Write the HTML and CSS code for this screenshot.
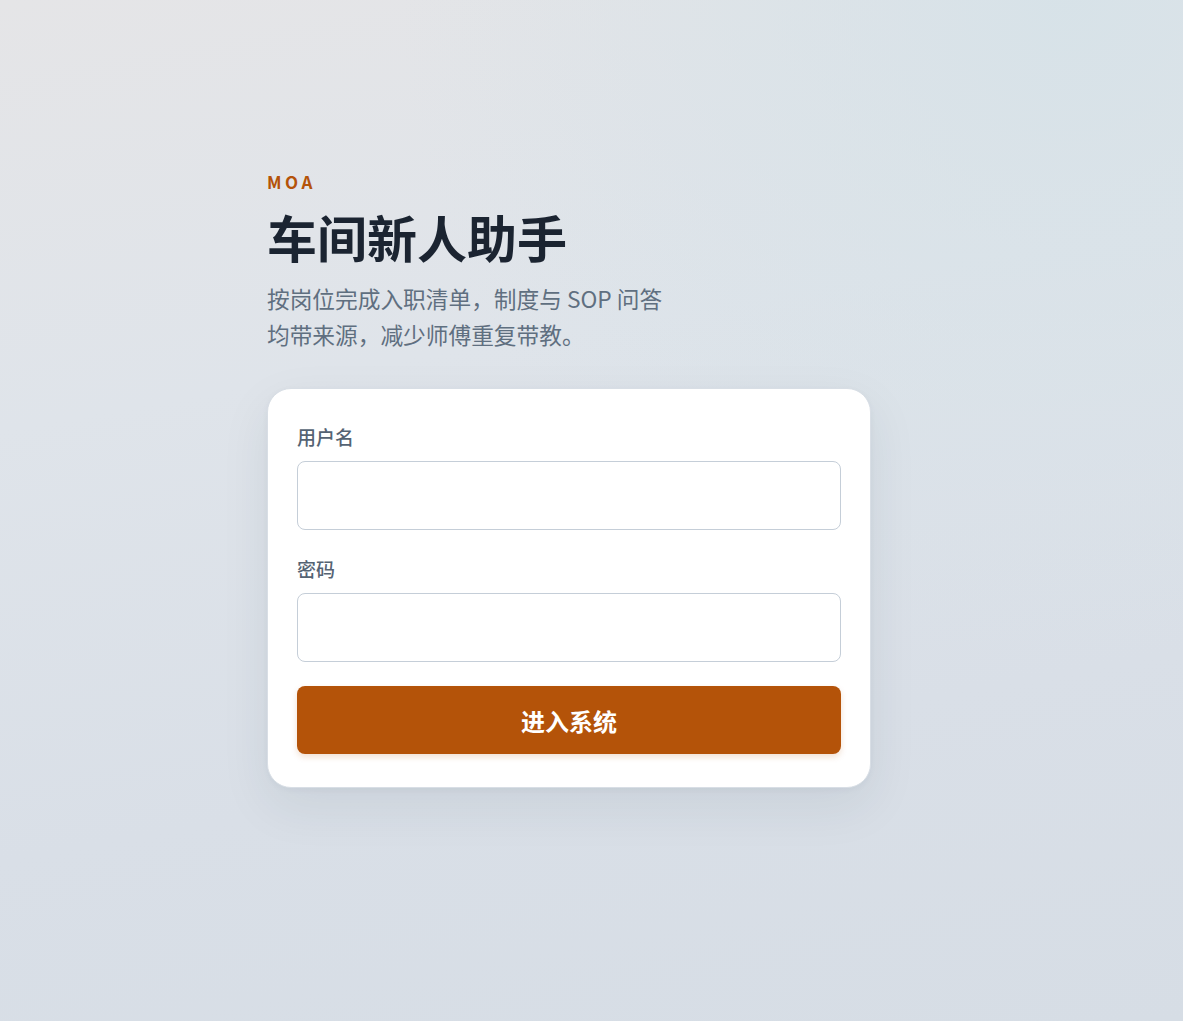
FILE: index.html
```html
<!DOCTYPE html>
<html lang="zh-CN">
<head>
<meta charset="utf-8">
<title>车间新人助手</title>
<link rel="stylesheet" href="styles.css">
</head>
<body>
<main class="page">
  <section class="intro">
    <div class="brand">MOA</div>
    <h1 class="title">车间新人助手</h1>
    <p class="lead">按岗位完成入职清单，制度与 SOP 问答均带来源，减少师傅重复带教。</p>
  </section>
  <form class="card" onsubmit="return false">
    <div class="field">
      <label class="label" for="u">用户名</label>
      <input class="input" id="u" type="text">
    </div>
    <div class="field">
      <label class="label" for="p">密码</label>
      <input class="input" id="p" type="password">
    </div>
    <button class="submit" type="submit">进入系统</button>
  </form>
</main>
</body>
</html>
```

FILE: styles.css
```css
* { box-sizing: border-box; }
html, body { margin: 0; height: 100%; }
body {
  font-family: "Noto Sans CJK SC", "Noto Sans", sans-serif;
  background:
    radial-gradient(circle at 90% 0%, rgba(214, 226, 232, 0.9), rgba(214, 226, 232, 0) 45%),
    linear-gradient(170deg, #e5e5e7 0%, #dfe4ea 35%, #d9dfe7 70%, #d6dde5 100%);
  color: #1c2533;
}
.page {
  width: 604px;
  margin: 0 0 0 267px;
  padding-top: 170px;
}
.intro { margin-bottom: 35px; }
.brand {
  color: #b45309;
  font-size: 17px;
  font-weight: 700;
  letter-spacing: 3.5px;
  line-height: 24px;
}
.title {
  margin: 10px 0 13px;
  font-size: 50px;
  font-weight: 700;
  line-height: 64px;
  color: #1b2431;
}
.lead {
  margin: 0;
  max-width: 410px;
  font-size: 22.7px;
  line-height: 36px;
  color: #5f6f80;
}
.card {
  width: 604px;
  background: #fff;
  border: 1px solid #d8dee5;
  border-radius: 24px;
  padding: 33px 29px 33px;
  display: flex;
  flex-direction: column;
  gap: 24px;
  box-shadow: 0 18px 50px rgba(30, 45, 70, 0.08), 0 2px 6px rgba(30, 45, 70, 0.04);
}
.field { display: flex; flex-direction: column; gap: 10px; }
.label {
  font-size: 19px;
  font-weight: 500;
  line-height: 29px;
  color: #556373;
}
.input {
  height: 69px;
  border: 1px solid #c5ced8;
  border-radius: 8px;
  background: #fff;
  font: inherit;
  font-size: 18px;
  padding: 0 16px;
  outline: none;
}
.submit {
  height: 68px;
  border: 0;
  border-radius: 8px;
  background: #b45309;
  color: #fff;
  font-family: inherit;
  font-size: 24px;
  font-weight: 700;
  box-shadow: 0 3px 6px rgba(180, 83, 9, 0.18);
  cursor: pointer;
}
```
